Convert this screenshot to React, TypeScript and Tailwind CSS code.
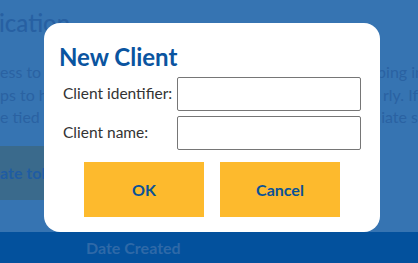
export default function App() {
  return (
    <div className="relative w-[418px] h-[263px] overflow-hidden bg-[#3674b2] font-['Lato',sans-serif]">
      <div className="flex flex-col h-full">
        <div className="h-[10px]" />
        <div className="text-[24px] leading-[26px] font-medium text-[#2760a2] whitespace-nowrap -ml-px">ication</div>
        <div className="mt-[25px] flex flex-col text-[16px] leading-[22.5px] text-[#2a62a2] whitespace-nowrap">
          <div className="flex justify-between"><span>ess to t</span><span className="-mr-[6px]">ping in</span></div>
          <div className="flex justify-between"><span>ps to h</span><span>rly. If</span></div>
          <div className="flex justify-between"><span>e tied to</span><span>iate s</span></div>
        </div>
        <div className="mt-[17px] w-[44px] h-[54px] bg-[#3a6a8c] flex items-center overflow-hidden">
          <span className="text-[16px] font-bold text-[#1f5ca3] whitespace-nowrap">ate tok</span>
        </div>
        <div className="flex-1" />
        <div className="h-[31px] bg-[#03519d] flex items-center pl-[86px]">
          <span className="text-[16px] font-bold text-[#2e69a8]">Date Created</span>
        </div>
      </div>

      <div className="absolute left-[44px] top-[23px] w-[336px] h-[209px] bg-white rounded-[16px] pl-[16px] pt-[19px]">
        <div className="-ml-px text-[24px] leading-[29px] font-bold text-[#0a54a0]">New Client</div>
        <div className="mt-[6px] grid grid-cols-[117px_184px] gap-y-[5px] items-center">
          <label className="pl-[3px] text-[15.5px] text-[#333] whitespace-nowrap">Client identifier:</label>
          <input className="h-[34px] border border-[#767676] rounded-[2px]" />
          <label className="pl-[3px] text-[15.5px] text-[#333] whitespace-nowrap">Client name:</label>
          <input className="h-[34px] border border-[#767676] rounded-[2px]" />
        </div>
        <div className="mt-[12px] flex gap-[16px] pl-[24px]">
          <button className="w-[120px] h-[55px] bg-[#fdba2d] text-[16px] font-bold text-[#0b5296]">OK</button>
          <button className="w-[120px] h-[55px] bg-[#fdba2d] text-[16px] font-bold text-[#0b5296]">Cancel</button>
        </div>
      </div>
    </div>
  );
}
